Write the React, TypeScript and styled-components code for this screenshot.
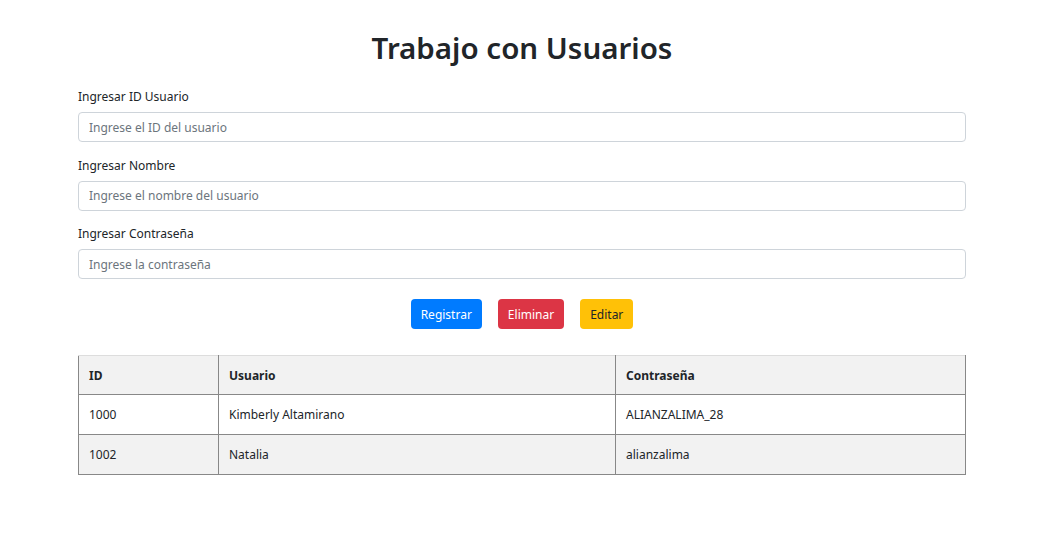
import React from "react";
import styled, { createGlobalStyle } from "styled-components";

const Global = createGlobalStyle`
  html, body { margin: 0; padding: 0; background: #fff; }
  body { font-family: "Noto Sans", "Open Sans", sans-serif; color: #212529; }
  * { box-sizing: border-box; }
`;

const Page = styled.div`
  width: 1058px;
  padding: 26px 92px 0 78px;
`;

const Title = styled.h1`
  margin: 0 0 17px;
  text-align: center;
  font-size: 29.5px;
  font-weight: 600;
  line-height: 44px;
  color: #212529;
`;

const Field = styled.div`
  display: flex;
  flex-direction: column;
  margin-bottom: 13.5px;
`;

const Label = styled.label`
  font-size: 12px;
  line-height: 20px;
  margin-bottom: 5px;
`;

const Input = styled.input`
  height: 30px;
  padding: 0 10px;
  border: 1px solid #ced4da;
  border-radius: 4px;
  font-family: inherit;
  font-size: 12px;
  color: #495057;
  &::placeholder { color: #6c757d; }
`;

const Actions = styled.div`
  display: flex;
  justify-content: center;
  gap: 16px;
  margin: 20px 0 26px;
`;

const Button = styled.button<{ $bg: string; $fg: string }>`
  height: 30px;
  padding: 0 10px;
  border: none;
  border-radius: 4px;
  background: ${(p) => p.$bg};
  color: ${(p) => p.$fg};
  font-family: inherit;
  font-size: 12px;
`;

const Table = styled.table`
  width: 100%;
  border-collapse: collapse;
  font-size: 12px;
`;

const Th = styled.th<{ $w?: number }>`
  text-align: left;
  font-weight: 700;
  height: 39px;
  padding: 0 10px;
  border: 1px solid #888;
  border-top-color: #ddd;
  background: #f2f2f2;
  width: ${(p) => (p.$w ? `${p.$w}px` : "auto")};
`;

const Tr = styled.tr`
  &:nth-child(even) { background: #f2f2f2; }
`;

const Td = styled.td`
  height: 40px;
  padding: 0 10px;
  border: 1px solid #888;
`;

const rows = [
  { id: "1000", user: "Kimberly Altamirano", pass: "ALIANZALIMA_28" },
  { id: "1002", user: "Natalia", pass: "alianzalima" },
];

export default function App() {
  return (
    <>
      <Global />
      <Page>
        <Title>Trabajo con Usuarios</Title>
        <Field>
          <Label>Ingresar ID Usuario</Label>
          <Input placeholder="Ingrese el ID del usuario" />
        </Field>
        <Field>
          <Label>Ingresar Nombre</Label>
          <Input placeholder="Ingrese el nombre del usuario" />
        </Field>
        <Field>
          <Label>Ingresar Contraseña</Label>
          <Input placeholder="Ingrese la contraseña" />
        </Field>
        <Actions>
          <Button $bg="#007bff" $fg="#fff">Registrar</Button>
          <Button $bg="#dc3545" $fg="#fff">Eliminar</Button>
          <Button $bg="#ffc107" $fg="#212529">Editar</Button>
        </Actions>
        <Table>
          <thead>
            <tr>
              <Th $w={140}>ID</Th>
              <Th $w={397}>Usuario</Th>
              <Th>Contraseña</Th>
            </tr>
          </thead>
          <tbody>
            {rows.map((r) => (
              <Tr key={r.id}>
                <Td>{r.id}</Td>
                <Td>{r.user}</Td>
                <Td>{r.pass}</Td>
              </Tr>
            ))}
          </tbody>
        </Table>
      </Page>
    </>
  );
}
